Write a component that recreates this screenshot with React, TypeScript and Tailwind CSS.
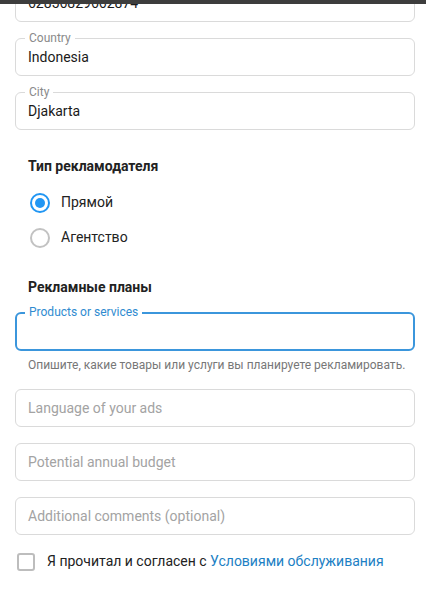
import React from "react";

const font = { fontFamily: "Roboto, 'Noto Sans', Arial, sans-serif" };

function Field({
  label,
  value,
  placeholder,
  focused,
  className = "",
}: {
  label?: string;
  value?: string;
  placeholder?: string;
  focused?: boolean;
  className?: string;
}) {
  return (
    <div
      className={`relative rounded-[6px] ${
        focused ? "h-[39px] border-2 border-[#3b96dc]" : "h-[38px] border border-[#dadada]"
      } ${className}`}
    >
      {label && (
        <span
          className={`absolute ${focused ? "-top-[9px] left-[8px]" : "-top-[8px] left-[9px]"} bg-white px-[4px] text-[12px] leading-[14px] ${
            focused ? "text-[#2f8bd0]" : "text-[#8a8a8a]"
          }`}
        >
          {label}
        </span>
      )}
      <div
        className={`flex h-full items-center pl-[12px] text-[14px] ${
          value ? "text-[#1a1a1a]" : "text-[#a3a3a3]"
        }`}
      >
        {value ?? placeholder}
      </div>
    </div>
  );
}

function Radio({ label, checked }: { label: string; checked?: boolean }) {
  return (
    <div className="flex h-[35px] items-center">
      <span
        className={`ml-[30px] flex h-[20px] w-[20px] items-center justify-center rounded-full border-2 ${
          checked ? "border-[#2196f3]" : "border-[#c2c2c2]"
        }`}
      >
        {checked && <span className="h-[10px] w-[10px] rounded-full bg-[#2196f3]" />}
      </span>
      <span className="ml-[11px] text-[14px] text-[#222]">{label}</span>
    </div>
  );
}

export default function App() {
  return (
    <div className="relative min-h-[592px] overflow-hidden bg-white" style={font}>
      <div className="fixed left-0 right-0 top-0 z-10 h-[4px] bg-[#3d3d3d]" />
      <div className="ml-[15px] mr-[11px]">
        <Field value="62856829662874" className="-mt-[16px]" />
        <Field label="Country" value="Indonesia" className="mt-[16px]" />
        <Field label="City" value="Djakarta" className="mt-[16px]" />

        <h3 className="ml-[13px] mt-[27px] text-[14px] font-bold leading-[18px] text-[#222]">
          Тип рекламодателя
        </h3>
        <div className="-ml-[15px] mt-[10px]">
          <Radio label="Прямой" checked />
          <Radio label="Агентство" />
        </div>

        <h3 className="ml-[13px] mt-[23px] text-[14px] font-bold leading-[18px] text-[#222]">
          Рекламные планы
        </h3>
        <Field label="Products or services" focused className="mt-[16px]" />
        <p className="ml-[13px] mt-[7px] whitespace-nowrap text-[12px] leading-[14px] text-[#777]">
          Опишите, какие товары или услуги вы планируете рекламировать.
        </p>
        <Field placeholder="Language of your ads" className="mt-[17px]" />
        <Field placeholder="Potential annual budget" className="mt-[16px]" />
        <Field placeholder="Additional comments (optional)" className="mt-[16px]" />

        <div className="mt-[16px] flex items-center">
          <span className="ml-[2px] h-[18px] w-[18px] rounded-[3px] border-2 border-[#bdbdbd]" />
          <span className="ml-[12px] text-[14px] text-[#222]">
            Я прочитал и согласен с{" "}
            <span className="text-[#1b80c4]">Условиями обслуживания</span>
          </span>
        </div>
      </div>
    </div>
  );
}
